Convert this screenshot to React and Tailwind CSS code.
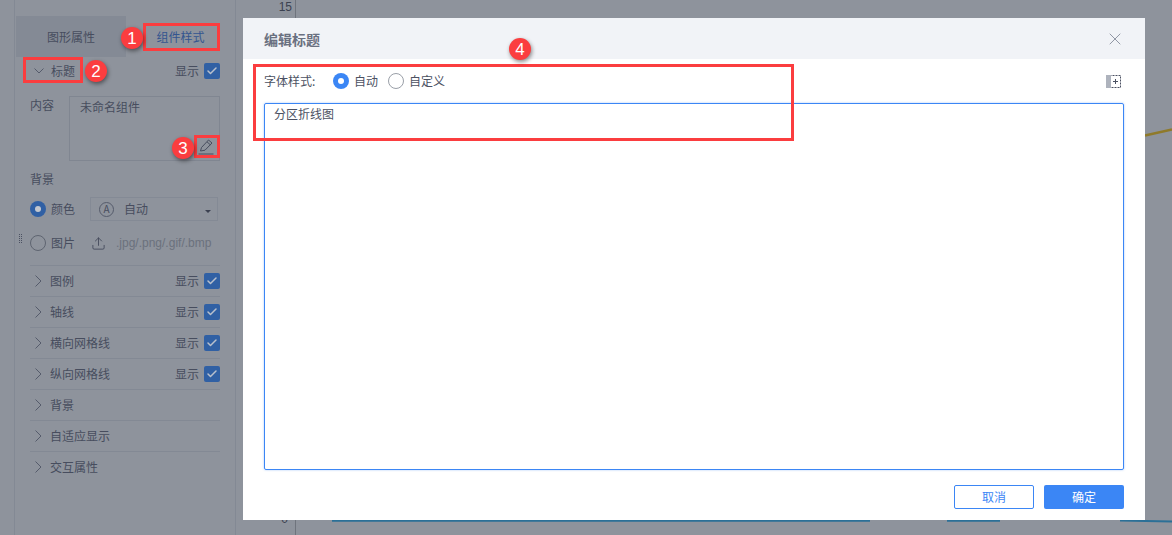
import { Check, Upload, X } from 'lucide-react';

const rows = [
  { title: '图例', show: true },
  { title: '轴线', show: true },
  { title: '横向网格线', show: true },
  { title: '纵向网格线', show: true },
  { title: '背景' },
  { title: '自适应显示' },
  { title: '交互属性' },
];

function ArrowRight() {
  return (
    <svg className="ml-[5px] shrink-0" width="7" height="12" viewBox="0 0 7 12">
      <path d="M0.5 0.5 L6 6 L0.5 11.5" fill="none" stroke="#555b6b" strokeWidth="1" />
    </svg>
  );
}

function ArrowDown() {
  return (
    <svg className="shrink-0" width="10" height="6" viewBox="0 0 10 6">
      <path d="M0.5 0.5 L5 5 L9.5 0.5" fill="none" stroke="#555b6b" strokeWidth="1" />
    </svg>
  );
}

function ShowCheck() {
  return (
    <div className="flex items-center gap-[5px]">
      <span>显示</span>
      <span className="flex h-4 w-4 items-center justify-center rounded-[2px] bg-[#3060a4]">
        <Check className="h-3 w-3 text-[#b9c0cc]" strokeWidth={3} />
      </span>
    </div>
  );
}

function Radio({ on, dim }) {
  if (on) {
    return (
      <span className={`flex h-4 w-4 items-center justify-center rounded-full ${dim ? 'bg-[#3060a4]' : 'bg-[#3b86f5]'}`}>
        <span className={`h-[6px] w-[6px] rounded-full ${dim ? 'bg-[#c3c7ce]' : 'bg-white'}`} />
      </span>
    );
  }
  return <span className={`h-4 w-4 rounded-full border ${dim ? 'border-[#5e6470]' : 'border-[#9a9fa8]'}`} />;
}

// numbered red marker on top of the screenshot
function Marker({ n, className }) {
  return (
    <span className={`absolute flex h-[22px] w-[22px] items-center justify-center rounded-full bg-[#fb3d3f] font-['Liberation_Sans',sans-serif] text-[17px] leading-none text-white shadow-[1px_2px_4px_rgba(0,0,0,0.45)] ${className}`}>
      {n}
    </span>
  );
}

function Sidebar() {
  return (
    <aside className="ml-[14px] flex h-full w-[222px] shrink-0 flex-col border-x border-[#838994] pt-4 pl-px text-xs text-[#474d5e]">
      <div className="flex h-[41px] shrink-0 items-center">
        <div className="flex h-full w-[110px] items-center justify-center bg-[#848a95]">图形属性</div>
        <div className="ml-[17px] w-[75px] text-center text-[#34558f]">组件样式</div>
      </div>

      <div className="flex h-[28px] shrink-0 items-center pl-[18px] pr-[15px]">
        <ArrowDown />
        <span className="ml-[7px] flex-1">标题</span>
        <ShowCheck />
      </div>

      <div className="mt-[11px] flex h-[65px] shrink-0 pl-[14px] pr-[15px]">
        <span className="w-[39px] pt-[1px]">内容</span>
        <div className="relative flex-1 border border-[#808691] pl-[10px] pt-[2px]">
          未命名组件
          <svg className="absolute bottom-[5px] right-[5px]" width="16" height="16" viewBox="0 0 16 16">
            <path d="M2.5 12 L3.5 8.5 L10.5 1 L14 4 L7 11.2 Z M9 2.8 L12.3 5.8" fill="none" stroke="#474d5e" strokeWidth="1" />
            <path d="M0.5 15 H15.5" stroke="#474d5e" strokeWidth="1" />
          </svg>
        </div>
      </div>

      <div className="mt-[10px] h-[18px] shrink-0 pl-[14px]">背景</div>

      <div className="mt-2 flex h-6 shrink-0 items-center pl-[14px] pr-[17px]">
        <Radio on dim />
        <span className="ml-[5px] w-[39px]">颜色</span>
        <div className="flex h-6 flex-1 items-center border border-[#848a95] pl-2 pr-[6px]">
          <span className="flex h-[15px] w-[15px] items-center justify-center rounded-full border border-[#555b6b] text-[10px] leading-none">A</span>
          <span className="ml-[10px] flex-1">自动</span>
          <span className="mt-1 h-0 w-0 border-x-[3px] border-t-[3px] border-x-transparent border-t-[#3b4150]" />
        </div>
      </div>

      <div className="relative mt-[10px] flex h-6 shrink-0 items-center pl-[14px]">
        <div className="absolute left-[3px] top-[3px] grid grid-cols-2 gap-x-[1px] gap-y-[1px]">
          {Array.from({ length: 10 }).map((_, i) => (
            <span key={i} className="h-[1px] w-[1px] bg-[#4b5162]" />
          ))}
        </div>
        <Radio dim />
        <span className="ml-[5px] w-[40px]">图片</span>
        <Upload className="h-[15px] w-[15px]" strokeWidth={1.5} />
        <span className="ml-[10px] font-['Liberation_Sans',sans-serif] text-[#6b717d]">.jpg/.png/.gif/.bmp</span>
      </div>

      <div className="mt-[10px] flex flex-col pl-[14px] pr-[15px]">
        {rows.map((row) => (
          <div key={row.title} className="flex h-[31px] items-center border-t border-[#838994]">
            <ArrowRight />
            <span className="ml-[8px] flex-1">{row.title}</span>
            {row.show && <ShowCheck />}
          </div>
        ))}
      </div>
    </aside>
  );
}

function Dialog() {
  return (
    <div className="absolute left-[243px] top-[18px] flex h-[502px] w-[902px] flex-col bg-white text-xs text-[#4b5162]">
      <div className="flex h-[41px] shrink-0 items-center justify-between bg-[#f1f3f7] pl-[21px] pr-[20px]">
        <span className="text-sm font-bold text-[#6a7080]">编辑标题</span>
        <X className="h-5 w-5 text-[#7d8494]" strokeWidth={1} />
      </div>

      <div className="flex flex-1 flex-col pl-[21px] pr-[21px]">
        <div className="flex h-[44px] shrink-0 items-center">
          <span className="w-[69px]">字体样式:</span>
          <Radio on />
          <span className="ml-[5px] w-[34px]">自动</span>
          <Radio />
          <span className="ml-[5px]">自定义</span>
          <svg className="ml-auto mr-[3px]" width="15" height="13" viewBox="0 0 15 13">
            <rect x="0.5" y="0.5" width="14" height="12" fill="none" stroke="#4b5162" strokeDasharray="2 1" />
            <rect x="0" y="0" width="5" height="13" fill="#aeb3bd" />
            <path d="M9.5 4v5M7 6.5h5" stroke="#4b5162" strokeWidth="1" />
          </svg>
        </div>

        <div className="h-[367px] shrink-0 rounded-[2px] border border-[#3b86f5] pl-[9px] pt-[2px] shadow-[0_0_2px_rgba(59,134,245,0.5)]">
          分区折线图
        </div>

        <div className="mt-[15px] flex justify-end gap-[10px]">
          <button className="h-6 w-20 rounded-[2px] border border-[#3b86f5] text-[#3b86f5]">取消</button>
          <button className="h-6 w-20 rounded-[2px] bg-[#3b86f5] text-white">确定</button>
        </div>
      </div>
    </div>
  );
}

export default function App() {
  return (
    <div className="relative h-[535px] w-[1172px] overflow-hidden bg-[#8e939c] font-['Noto_Sans_CJK_SC','Liberation_Sans',sans-serif]">
      <div className="flex h-full">
        <Sidebar />
        <div className="flex w-[60px] shrink-0 flex-col items-end justify-between border-r border-[#6f747d] pr-[3px] font-['Liberation_Sans',sans-serif] text-xs leading-[14px] text-[#3b4150]">
          <span>15</span>
          <span className="mb-[9px] mr-[4px]">0</span>
        </div>
        {/* chart lines, mostly hidden behind the dialog */}
        <svg className="flex-1" viewBox="0 0 876 535">
          <path d="M849 135.5 L876 129.5" fill="none" stroke="#8f7a2a" strokeWidth="2.5" />
          <path d="M36 520.7 H574 M651 520.7 H704 M824 520.5 L876 521.5" fill="none" stroke="#2b7097" strokeWidth="2" />
        </svg>
      </div>

      <Dialog />

      {/* red annotations */}
      <div className="absolute left-[143px] top-[23px] h-[28px] w-[77px] border-[3px] border-[#fb3d3f]" />
      <div className="absolute left-[23px] top-[57px] h-[26px] w-[60px] border-[3px] border-[#fb3d3f]" />
      <div className="absolute left-[194px] top-[135px] h-[23px] w-[26px] border-[3px] border-[#fb3d3f]" />
      <div className="absolute left-[253px] top-[64px] h-[77px] w-[541px] border-[3px] border-[#fb3d3f]" />
      <Marker n="1" className="left-[121px] top-[27px]" />
      <Marker n="2" className="left-[85px] top-[60px]" />
      <Marker n="3" className="left-[172px] top-[137px]" />
      <Marker n="4" className="left-[509px] top-[38px]" />
    </div>
  );
}
